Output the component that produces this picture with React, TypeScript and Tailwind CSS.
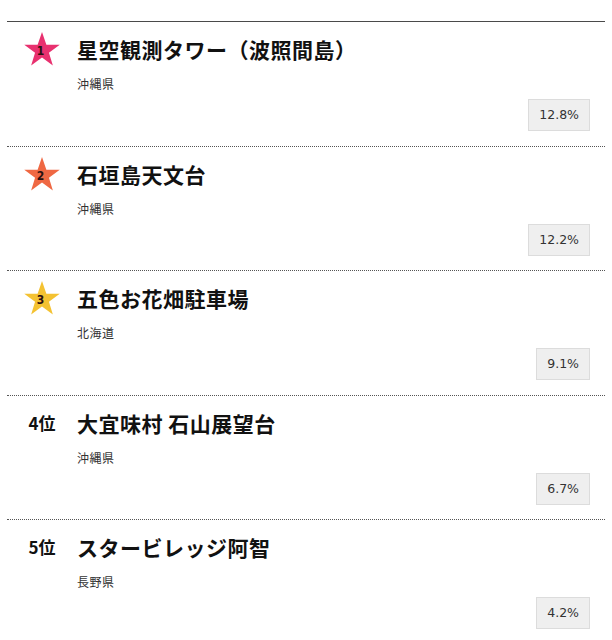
import React from 'react';

type Spot = {
  rank: number;
  name: string;
  pref: string;
  rate: string;
};

const spots: Spot[] = [
  { rank: 1, name: '星空観測タワー（波照間島）', pref: '沖縄県', rate: '12.8%' },
  { rank: 2, name: '石垣島天文台', pref: '沖縄県', rate: '12.2%' },
  { rank: 3, name: '五色お花畑駐車場', pref: '北海道', rate: '9.1%' },
  { rank: 4, name: '大宜味村 石山展望台', pref: '沖縄県', rate: '6.7%' },
  { rank: 5, name: 'スタービレッジ阿智', pref: '長野県', rate: '4.2%' },
];

const starColors: Record<number, string> = {
  1: '#e8316f',
  2: '#ef6843',
  3: '#f4c232',
};

function RankStar({ rank }: { rank: number }) {
  return (
    <div className="relative w-[38px] h-[34px]">
      <svg viewBox="0 0 100 92" className="absolute inset-0 w-full h-full">
        <polygon
          points="50,0 61.8,34.5 98,34.5 68.8,55.9 79.4,90.5 50,69.1 20.6,90.5 31.2,55.9 2,34.5 38.2,34.5"
          fill={starColors[rank]}
        />
      </svg>
      <span className="absolute inset-0 flex items-center justify-center pt-[4px] pr-[3px] text-[12px] font-bold leading-none text-[#2a1010] font-['DejaVu_Sans_Condensed','DejaVu_Sans',sans-serif]">
        {rank}
      </span>
    </div>
  );
}

export default function App() {
  return (
    <div className="bg-white min-h-[640px] pt-[21px] font-['Noto_Sans_CJK_JP',sans-serif]">
      <div className="mx-[7px] border-t border-[#4a4a4a]">
        {spots.map((spot, i) => (
          <div
            key={spot.rank}
            className={`pt-[13px] ${i % 2 === 0 ? 'pb-[15px]' : 'pb-[14px]'} ${i > 0 ? 'border-t border-dotted border-[#555]' : ''}`}
          >
            <div className="flex items-center h-[28px]">
              <div className="w-[70px] flex justify-center shrink-0">
                {spot.rank <= 3 ? (
                  <RankStar rank={spot.rank} />
                ) : (
                  <span className="text-[17px] font-bold text-[#111]">{spot.rank}位</span>
                )}
              </div>
              <div className="text-[21px] font-bold tracking-[0.5px] text-[#111] leading-[28px]">
                {spot.name}
              </div>
            </div>
            <div className="pl-[70px] mt-[12px] text-[12px] leading-[18px] tracking-[0.5px] text-[#333]">
              {spot.pref}
            </div>
            <div className="flex justify-end pr-[15px] mt-[6px]">
              <div className="h-[32px] px-[10px] flex items-center bg-[#efefef] border border-[#dcdcdc] text-[12.5px] text-[#333] font-['DejaVu_Sans',sans-serif]">
                {spot.rate}
              </div>
            </div>
          </div>
        ))}
      </div>
    </div>
  );
}
